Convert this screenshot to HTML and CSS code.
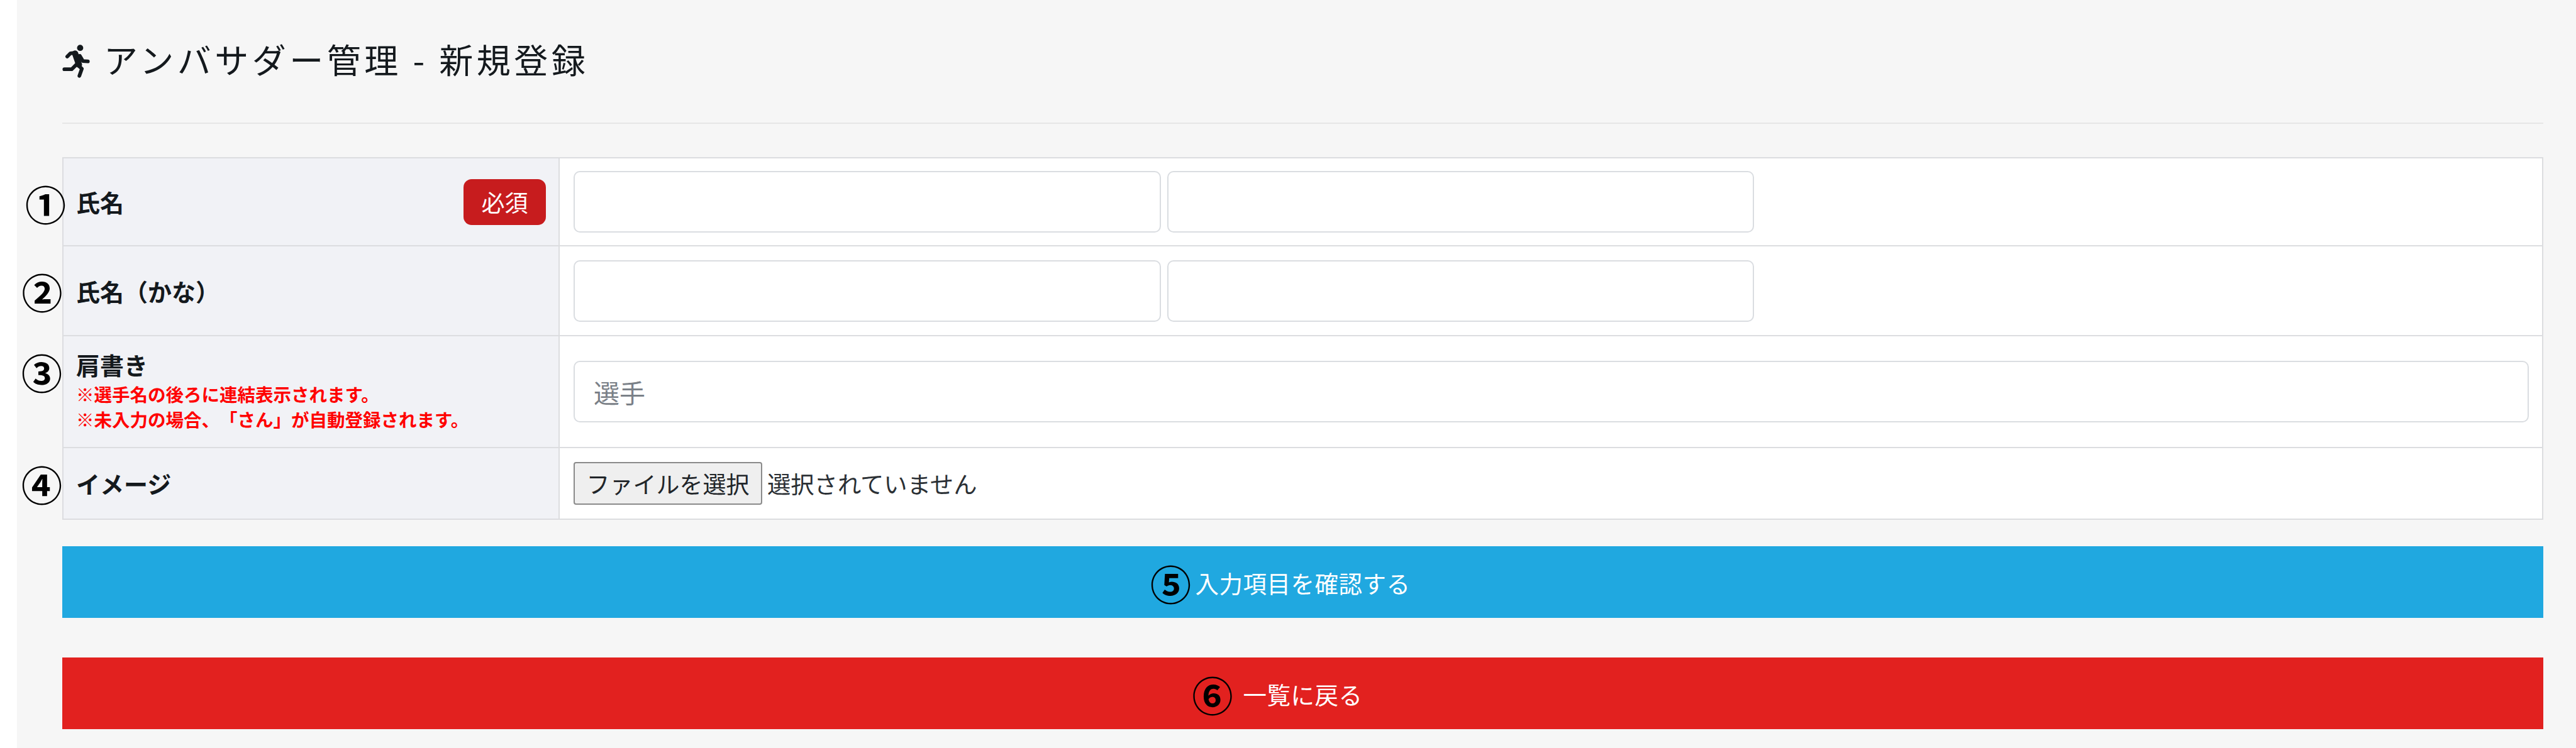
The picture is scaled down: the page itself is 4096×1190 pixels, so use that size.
FILE: index.html
```html
<!DOCTYPE html>
<html lang="ja">
<head>
<meta charset="utf-8">
<title>アンバサダー管理 - 新規登録</title>
<link rel="stylesheet" href="styles.css">
</head>
<body>
<main class="panel">
  <header class="page-title">
    <svg class="run-icon" viewBox="140 110 142 173" aria-hidden="true">
      <circle class="run-head" cx="232" cy="127" r="16"/>
      <path class="run-body" d="M206 156 L226 214"/>
      <path class="run-limb" d="M208 152 L182 155 L165 172"/>
      <path class="run-limb" d="M230 168 L246 195 L272 197"/>
      <path class="run-limb" d="M212 214 L188 238 L150 238"/>
      <path class="run-limb" d="M218 214 L241 235 L228 272"/>
    </svg>
    <h1 class="title-text">アンバサダー管理 - 新規登録</h1>
  </header>

  <form class="form-area">
    <table class="form-table">
      <tr class="row-name">
        <th><div class="label-line"><span>氏名</span><span class="badge">必須</span></div></th>
        <td><div class="pair"><input class="field field-half" type="text"><input class="field field-half" type="text"></div></td>
      </tr>
      <tr class="row-kana">
        <th><span>氏名（かな）</span></th>
        <td><div class="pair"><input class="field field-half" type="text"><input class="field field-half" type="text"></div></td>
      </tr>
      <tr class="row-honor">
        <th>
          <div class="label-stack">
            <span>肩書き</span>
            <small class="note note-first">※選手名の後ろに連結表示されます。</small>
            <small class="note">※未入力の場合、「さん」が自動登録されます。</small>
          </div>
        </th>
        <td><input class="field field-full" type="text" placeholder="選手"></td>
      </tr>
      <tr class="row-image">
        <th><span>イメージ</span></th>
        <td><div class="file-line"><button class="file-btn" type="button">ファイルを選択</button><span class="file-state">選択されていません</span></div></td>
      </tr>
    </table>

    <button class="action action-confirm" type="button">入力項目を確認する</button>
    <button class="action action-back" type="button">一覧に戻る</button>

    <span class="mark mark-1">①</span>
    <span class="mark mark-2">②</span>
    <span class="mark mark-3">③</span>
    <span class="mark mark-4">④</span>
    <span class="mark mark-5">⑤</span>
    <span class="mark mark-6">⑥</span>
  </form>
</main>
</body>
</html>
```
FILE: styles.css
```css
* { box-sizing: border-box; }
html, body { margin: 0; height: 100%; background: #fff; }
body {
  font-family: "Noto Sans CJK JP", "Noto Sans", sans-serif;
  color: #212529;
  overflow: hidden;
  text-spacing-trim: space-all;
}
.panel {
  margin-left: 27px;
  height: 1190px;
  background: #f6f6f6;
  padding: 0 52px 0 72px;
}
.page-title {
  height: 197px;
  display: flex;
  align-items: center;
  gap: 22px;
  border-bottom: 2px solid #e6e6e6;
}
.run-icon { width: 44px; height: 53px; flex: none; }
.run-head { fill: #14191d; }
.run-body { stroke: #14191d; stroke-width: 32; stroke-linecap: round; fill: none; }
.run-limb { stroke: #14191d; stroke-width: 19; stroke-linecap: round; stroke-linejoin: round; fill: none; }
.title-text {
  margin: 0 0 8px;
  font-size: 54px;
  font-weight: 400;
  letter-spacing: 5.5px;
  line-height: 60px;
  color: #14191d;
}
.form-area {
  position: relative;
  margin-top: 53px;
}
.form-table {
  width: 100%;
  border-collapse: collapse;
  table-layout: fixed;
  background: #fff;
  border: 2px solid #dcdde0;
}
.form-table th, .form-table td {
  border: 2px solid #dcdde0;
  vertical-align: middle;
  text-align: left;
}
.form-table th {
  width: 789px;
  background: #f1f2f6;
  padding: 0 20px 0 20px;
  font-size: 38px;
  font-weight: 700;
  line-height: 44px;
  color: #14191d;
}
.form-table td { padding: 0 21px 0 22px; }
.row-name { height: 140px; }
.row-kana { height: 143px; }
.row-honor { height: 178px; }
.row-image { height: 114px; }
.label-line { display: flex; align-items: center; justify-content: space-between; }
.badge {
  width: 131px;
  height: 73px;
  border-radius: 13px;
  background: #c71c1e;
  color: #fff;
  font-size: 37px;
  font-weight: 400;
  display: flex;
  align-items: center;
  justify-content: center;
}
.label-stack { display: flex; flex-direction: column; margin-top: -1px; }
.note {
  font-size: 28.5px;
  font-weight: 700;
  line-height: 40px;
  color: #f00;
}
.note-first { margin-top: 5px; }
.pair { display: flex; gap: 10px; }
.field {
  display: block;
  height: 98px;
  border: 2px solid #dadde1;
  border-radius: 10px;
  background: #fff;
  padding: 0 30px;
  font: 400 41px "Noto Sans CJK JP", sans-serif;
  color: #212529;
}
.field::placeholder { color: #7a8087; opacity: 1; }
.field-half { width: 933.5px; }
.field-full { width: 100%; }
.file-line { display: flex; align-items: center; gap: 8px; }
.file-btn {
  width: 300px;
  height: 68px;
  border: 2px solid #8a8a8a;
  border-radius: 4px;
  background: #efefef;
  padding: 0;
  font: 400 37px "Noto Sans CJK JP", sans-serif;
  color: #212529;
}
.file-state { font-size: 37.3px; color: #2b3035; }
.action {
  display: block;
  width: 100%;
  height: 114px;
  border: 0;
  padding: 0;
  color: #fff;
  font: 400 37.5px "Noto Sans CJK JP", sans-serif;
  letter-spacing: 0.5px;
}
.action-confirm { margin-top: 42px; background: #20a8e0; }
.action-back { margin-top: 63px; background: #e2211f; }
.mark {
  position: absolute;
  width: 60px;
  height: 60px;
  display: flex;
  align-items: center;
  justify-content: center;
  font-size: 65px;
  font-weight: 700;
  line-height: 60px;
  color: #000;
}
.mark-1 { left: -56.4px; top: 43px; }
.mark-2 { left: -62px; top: 183px; }
.mark-3 { left: -62.4px; top: 311px; }
.mark-4 { left: -62.4px; top: 489.4px; }
.mark-5 { left: 1732.6px; top: 646.5px; }
.mark-6 { left: 1799px; top: 823.5px; }
```
